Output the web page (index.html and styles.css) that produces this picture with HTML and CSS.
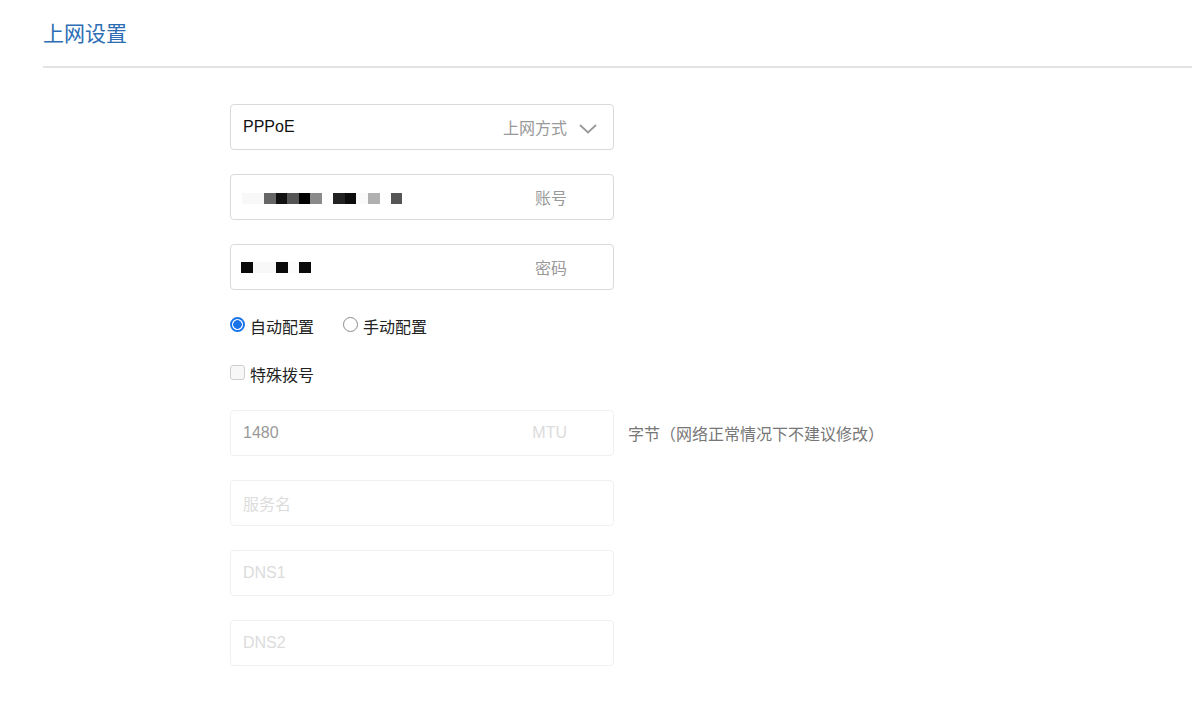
FILE: index.html
```html
<!DOCTYPE html>
<html lang="zh-CN">
<head>
    <meta charset="UTF-8">
    <meta name="viewport" content="width=device-width, initial-scale=1.0">
    <title>上网设置</title>
    <link rel="stylesheet" href="styles.css">
</head>
<body>
    <div class="page">
        <h1 class="page-title">上网设置</h1>

        <form class="wan-form">
            <div class="field">
                <div class="box">
                    <span class="value">PPPoE</span>
                    <span class="suffix">上网方式</span>
                    <svg class="chevron" width="18" height="10" viewBox="0 0 18 10">
                        <path d="M1 1 L9 8.5 L17 1" fill="none" stroke="#9a9a9a" stroke-width="1.8"/>
                    </svg>
                </div>
            </div>

            <div class="field">
                <div class="box">
                    <!-- masked account -->
                    <span class="mosaic">
                        <i style="width:22px;background:#f8f8f8"></i>
                        <i style="width:12px;background:#666"></i>
                        <i style="width:11px;background:#111"></i>
                        <i style="width:12px;background:#555"></i>
                        <i style="width:11px;background:#000"></i>
                        <i style="width:12px;background:#8a8a8a"></i>
                        <i style="width:11px;background:#fff"></i>
                        <i style="width:12px;background:#222"></i>
                        <i style="width:11px;background:#0c0c0c"></i>
                        <i style="width:12px;background:#fafafa"></i>
                        <i style="width:12px;background:#b0b0b0"></i>
                        <i style="width:11px;background:#fff"></i>
                        <i style="width:11px;background:#555"></i>
                    </span>
                    <span class="suffix">账号</span>
                </div>
            </div>

            <div class="field">
                <div class="box">
                    <span class="mosaic pw">
                        <i style="width:12px;background:#0a0a0a"></i>
                        <i style="width:23px;background:#f8f8f8"></i>
                        <i style="width:12px;background:#0a0a0a"></i>
                        <i style="width:11px;background:#fcfcfc"></i>
                        <i style="width:12px;background:#0a0a0a"></i>
                    </span>
                    <span class="suffix">密码</span>
                </div>
            </div>

            <div class="option-row">
                <label class="option"><input type="radio" name="mode" checked> 自动配置</label>
                <label class="option"><input type="radio" name="mode"> 手动配置</label>
            </div>

            <div class="option-row">
                <label class="option"><input type="checkbox"> 特殊拨号</label>
            </div>

            <div class="field">
                <div class="box disabled">
                    <span class="value">1480</span>
                    <span class="suffix">MTU</span>
                </div>
                <span class="hint">字节（网络正常情况下不建议修改）</span>
            </div>

            <div class="field">
                <div class="box disabled">
                    <span class="placeholder">服务名</span>
                </div>
            </div>

            <div class="field">
                <div class="box disabled">
                    <span class="placeholder">DNS1</span>
                </div>
            </div>

            <div class="field">
                <div class="box disabled">
                    <span class="placeholder">DNS2</span>
                </div>
            </div>
        </form>
    </div>
</body>
</html>
```

FILE: styles.css
```css
body {
    margin: 0;
    background: #fff;
    font-family: "Liberation Sans", "Noto Sans CJK SC", sans-serif;
    color: #222;
}
.page {
    padding-left: 43px;
}
.page-title {
    margin: 0;
    padding: 21px 0 19px;
    height: 26px;
    line-height: 26px;
    font-size: 21px;
    font-weight: normal;
    color: #2c6db4;
    border-bottom: 2px solid #e3e3e3;
}
.wan-form {
    padding: 36px 0 0 187px;
    display: flex;
    flex-direction: column;
    gap: 24px;
}
.field {
    display: flex;
    align-items: center;
}
.box {
    width: 384px;
    height: 46px;
    box-sizing: border-box;
    border: 1px solid #d9d9d9;
    border-radius: 4px;
    padding: 0 46px 0 12px;
    display: flex;
    align-items: center;
    font-size: 16px;
    position: relative;
}
.box .value {
    flex: 1;
    color: #111;
}
.box .suffix {
    margin-left: auto;
    color: #999;
}
.chevron {
    position: absolute;
    right: 16px;
    top: 19px;
}
.box.disabled {
    border-color: #f0f0f0;
}
.box.disabled .value {
    color: #999;
}
.box.disabled .suffix,
.box .placeholder {
    color: #dcdcdc;
}
.mosaic {
    display: flex;
    height: 11px;
    margin-top: 2px;
    margin-left: -1px;
}
.mosaic.pw {
    margin-left: -2px;
    margin-top: 0;
}
.mosaic i {
    display: block;
    height: 100%;
}
.hint {
    margin-left: 14px;
    font-size: 16px;
    color: #777;
}
.option-row {
    display: flex;
    gap: 29px;
    height: 24px;
    align-items: center;
}
.option {
    display: flex;
    align-items: center;
    font-size: 16px;
    color: #222;
    gap: 5px;
}
.option input {
    appearance: none;
    margin: 0;
    width: 15px;
    height: 15px;
    box-sizing: border-box;
    position: relative;
    top: -2px;
}
.option input[type="radio"] {
    border: 1px solid #8a8a8a;
    border-radius: 50%;
}
.option input[type="radio"]:checked {
    border: 2px solid #1a73e8;
    background: radial-gradient(circle, #1a73e8 0 4px, #fff 4.6px);
}
.option input[type="checkbox"] {
    border: 1px solid #cfcfcf;
    border-radius: 3px;
    background: #f7f7f7;
}
```
